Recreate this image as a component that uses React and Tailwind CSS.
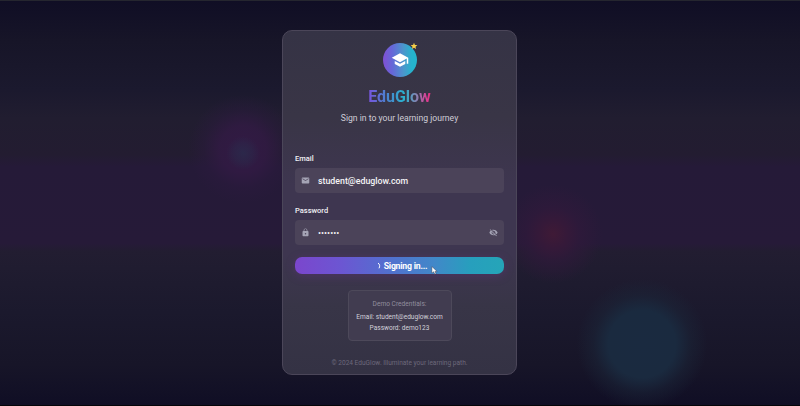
import { MdSchool, MdEmail, MdLock, MdVisibilityOff, MdStar } from "react-icons/md";

function Field({ label, icon: Icon, children, trailing }) {
  return (
    <div className="flex flex-col">
      <div className="h-[10px] pt-px text-[7.5px] leading-[10px] font-medium text-[#f1f0f4]">{label}</div>
      <div className="mt-[5px] flex h-[25px] items-center rounded-[4px] bg-[#4b4359] px-[6px]">
        <Icon className="size-[9px] shrink-0 text-[#a5a4b5]" />
        <div className="ml-[8px] flex flex-1 items-center text-[#f4f3f6]">{children}</div>
        {trailing}
      </div>
    </div>
  );
}

function Glows() {
  return (
    <div className="pointer-events-none absolute inset-0 overflow-hidden">
      <div className="absolute left-[188px] top-[93px] size-[110px] rounded-full bg-[radial-gradient(circle,#321a44_0%,#321a44d0_30%,#2c1a3f70_50%,#2c1a3f00_70%)]" />
      <div className="absolute left-[226px] top-[135px] size-[34px] rounded-full bg-[radial-gradient(circle,#27324f90_0%,#27324f50_40%,#27324f00_70%)]" />
      <div className="absolute left-[503px] top-[183px] size-[100px] rounded-full bg-[radial-gradient(circle,#3f1a36_0%,#351939_20%,#30193bb0_38%,#2c193a00_70%)]" />
      <div className="absolute left-[576px] top-[277px] size-[132px] rounded-full bg-[radial-gradient(circle,#1a2a40_0%,#1a2a3f_36%,#1b263980_52%,#1a213400_70%)]" />
    </div>
  );
}

export default function App() {
  return (
    <div className="relative flex h-[406px] w-[800px] justify-center overflow-hidden border-t border-b border-t-[#25262f] border-b-[#050509] bg-[linear-gradient(180deg,#100e25_0%,#171528_10%,#1b192e_22%,#211d30_29%,#231c31_38%,#251a38_41%,#261a38_60%,#221d31_62%,#1e1b2f_70%,#1b192d_77%,#171528_90%,#100e25_100%)] pt-[29px] font-[Roboto,sans-serif]">
      <Glows />
      <div className="relative mr-px flex h-[345px] w-[235px] flex-col rounded-[10px] border border-[#4b4659] bg-[linear-gradient(180deg,#353345_0%,#393546_25%,#3e3650_45%,#3e3650_65%,#383547_80%,#343244_100%)] px-[12px] pt-[12px]">
        <div className="relative flex size-[34px] items-center justify-center self-center rounded-full bg-[linear-gradient(90deg,#8050d4_0%,#6568d8_28%,#4b96cc_60%,#25b4cd_85%,#25b4cd_100%)]">
          <MdSchool className="size-[18px] text-white" />
          <MdStar className="absolute -right-[1px] -top-[1px] size-[8px] text-[#f6cf48]" />
        </div>
        <h1 className="mt-[10px] h-[20px] self-center bg-[linear-gradient(90deg,#7953dc_0%,#4a83cf_30%,#29b2cd_58%,#8b7fb0_78%,#dc3d94_93%,#e22f7c_100%)] bg-clip-text text-center text-[16px] leading-[20px] font-bold text-transparent">
          EduGlow
        </h1>
        <p className="mt-[5px] h-[12px] text-center text-[8.65px] leading-[12px] whitespace-nowrap text-[#cfcdd7]">
          Sign in to your learning journey
        </p>

        <div className="mt-[29px] flex flex-col gap-[12px]">
          <Field label="Email" icon={MdEmail}>
            <span className="text-[8.8px] leading-[12px] font-medium">student@eduglow.com</span>
          </Field>
          <Field
            label="Password"
            icon={MdLock}
            trailing={<MdVisibilityOff className="size-[9px] shrink-0 text-[#a5a4b5]" />}
          >
            <span className="text-[9px] leading-[12px]">•••••••</span>
          </Field>
        </div>

        <button className="relative mt-[12px] flex h-[17px] w-full shrink-0 items-center justify-center gap-[3px] rounded-[7px] bg-[linear-gradient(90deg,#7b46cd_0%,#6c56d2_22%,#5270cf_45%,#4287c9_66%,#279fbd_84%,#25a5b8_100%)] pl-[5px] text-[8.7px] leading-[12px] font-bold tracking-[-0.22px] text-white shadow-[0_2px_10px_#64328270]">
          <svg viewBox="0 0 4 8" className="h-[8px] w-[4px]" fill="none" stroke="white" strokeWidth="1">
            <path d="M1 1C3 2.2 3 4.5 2 6.3" />
          </svg>
          Signing in...
          <svg viewBox="0 0 8 10" className="absolute left-[136px] top-[9px] h-[9px] w-[7px]">
            <path d="M1 .5V8L3 6.4 4.4 9.2 5.8 8.5 4.5 6H7Z" fill="white" stroke="#343244" strokeWidth=".5" />
          </svg>
        </button>

        <div className="mt-[16px] flex h-[51px] w-[104px] shrink-0 flex-col self-center rounded-[4px] border border-[#4d495a] bg-[#413c50] pt-[8px] text-center whitespace-nowrap">
          <div className="h-[10px] text-[6.6px] leading-[10px] text-[#918e9e]">Demo Credentials:</div>
          <div className="mt-[3px] h-[10px] text-[6.55px] leading-[10px] text-[#d3d1da]">Email: student@eduglow.com</div>
          <div className="mt-[1px] h-[10px] text-[6.55px] leading-[10px] text-[#d3d1da]">Password: demo123</div>
        </div>
        <p className="mt-[17px] text-center text-[6.55px] leading-[10px] whitespace-nowrap text-[#6c687b]">
          © 2024 EduGlow. Illuminate your learning path.
        </p>
      </div>
    </div>
  );
}
